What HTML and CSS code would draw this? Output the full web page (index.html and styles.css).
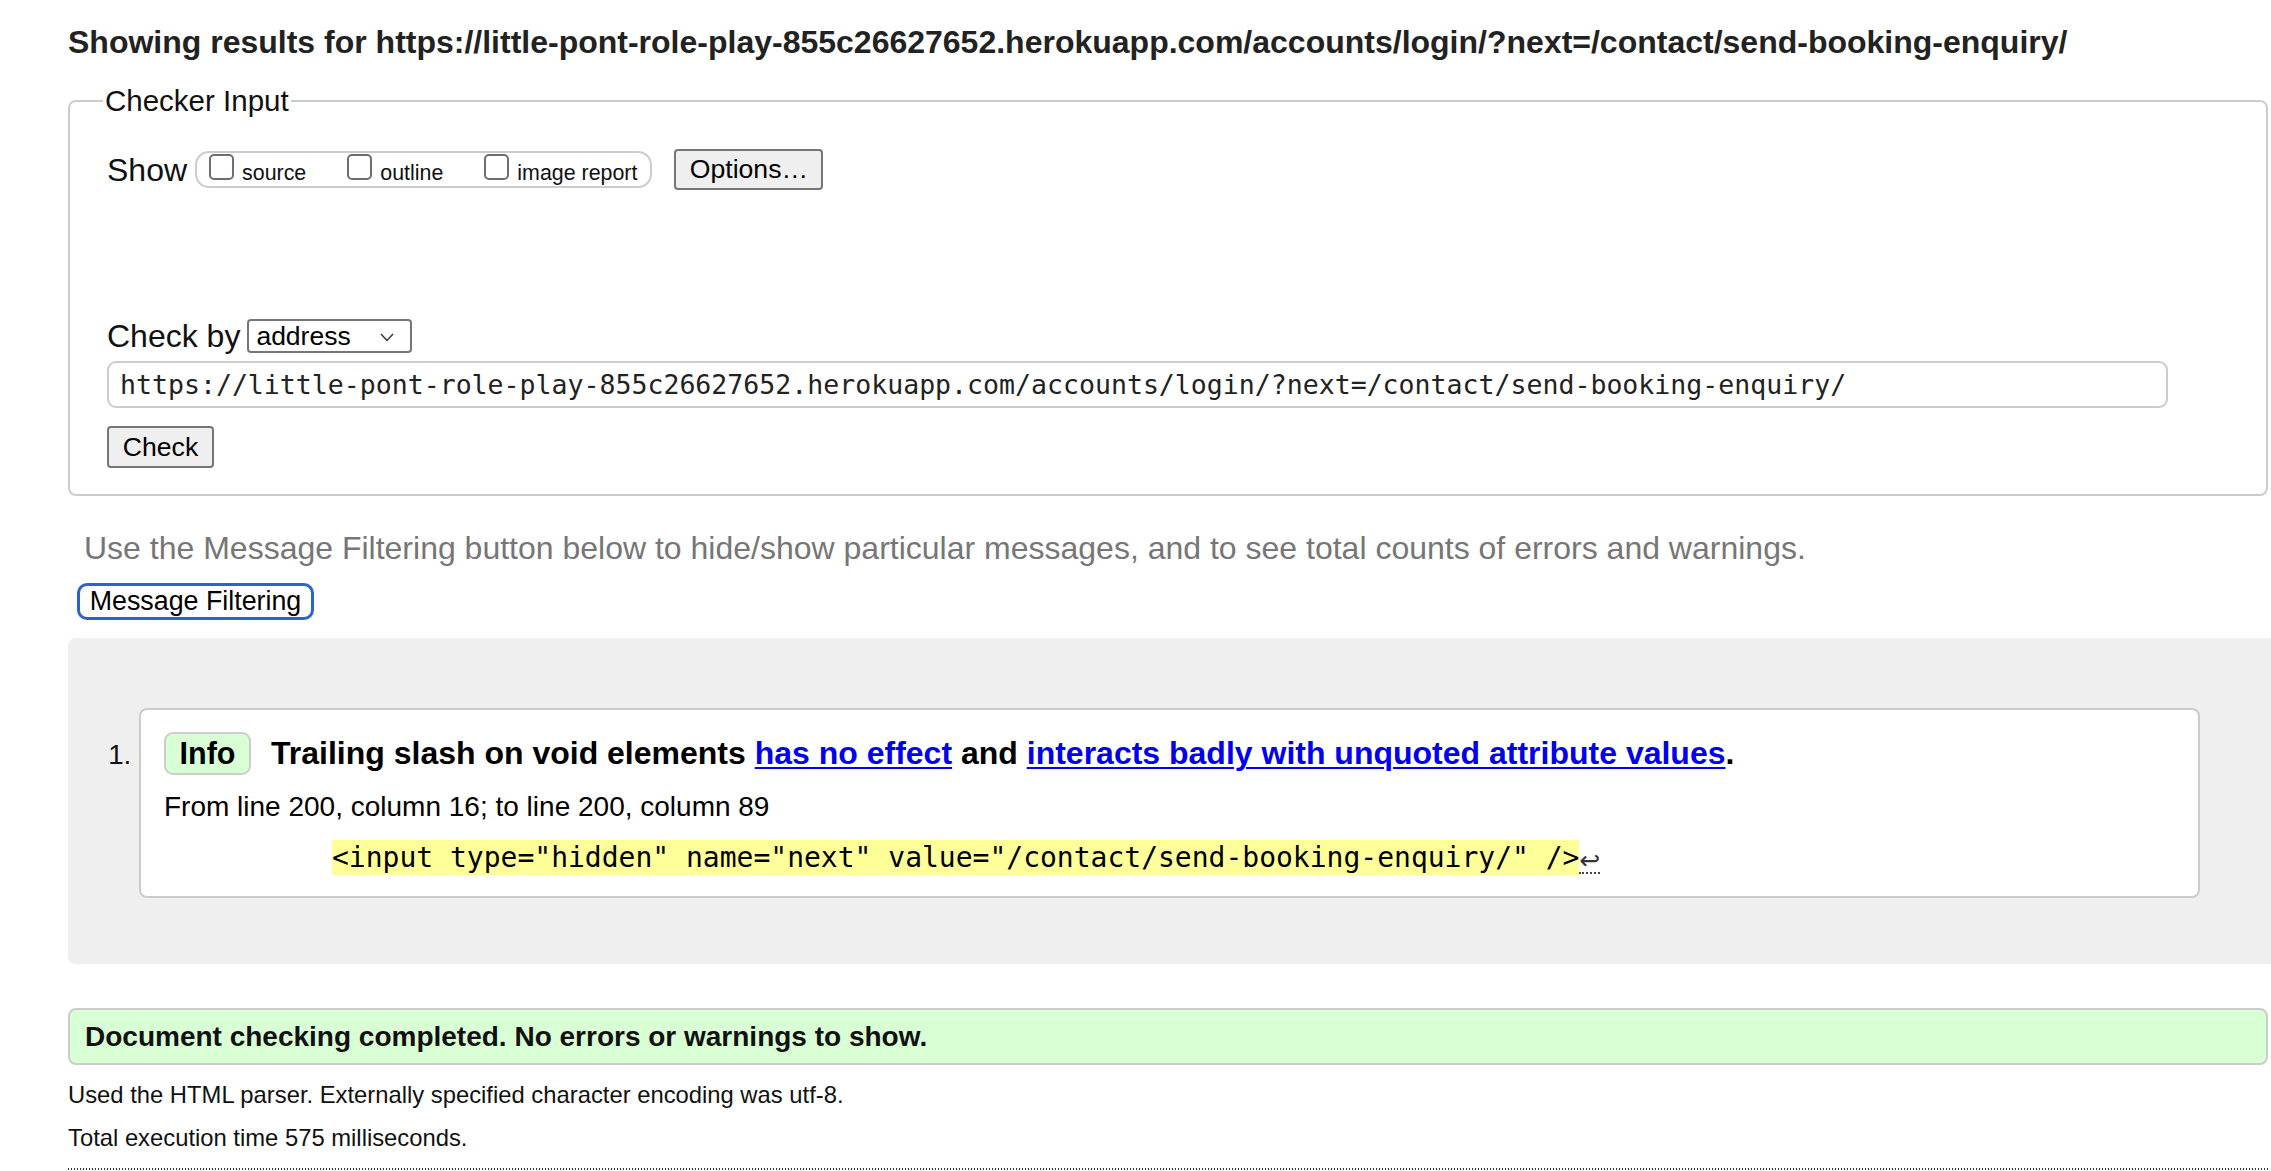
FILE: index.html
```html
<!DOCTYPE html>
<html lang="en">
<head>
<meta charset="utf-8">
<title>Nu Html Checker</title>
<link rel="stylesheet" href="styles.css">
</head>
<body>
<h2 class="heading">Showing results for https://little-pont-role-play-855c26627652.herokuapp.com/accounts/login/?next=/contact/send-booking-enquiry/</h2>

<fieldset class="checker">
  <legend class="legend">Checker Input</legend>
  <div class="show-row">
    <span class="label">Show</span>
    <span class="pill">
      <span class="opt"><span class="box"></span><span class="opt-text">source</span></span>
      <span class="opt"><span class="box"></span><span class="opt-text">outline</span></span>
      <span class="opt"><span class="box"></span><span class="opt-text">image report</span></span>
    </span>
    <span class="btn btn-options">Options…</span>
  </div>
  <div class="checkby-row">
    <span class="label">Check by</span>
    <span class="select"><span class="select-text">address</span><svg class="chev" width="14" height="9" viewBox="0 0 14 9"><polyline points="1,1 7,7.5 13,1" fill="none" stroke="#333" stroke-width="1.4"/></svg></span>
  </div>
  <div class="url-input">https://little-pont-role-play-855c26627652.herokuapp.com/accounts/login/?next=/contact/send-booking-enquiry/</div>
  <div class="check-row"><span class="btn btn-check">Check</span></div>
</fieldset>

<p class="hint">Use the Message Filtering button below to hide/show particular messages, and to see total counts of errors and warnings.</p>
<div class="filter-row"><span class="btn-filter">Message Filtering</span></div>

<div class="results">
  <ol class="messages">
    <li class="message">
      <p class="msg-title"><span class="badge">Info</span><span class="msg-text">Trailing slash on void elements <a href="#" class="link">has no effect</a> and <a href="#" class="link">interacts badly with unquoted attribute values</a>.</span></p>
      <p class="location">From line 200, column 16; to line 200, column 89</p>
      <p class="extract"><code class="code">&lt;input type="hidden" name="next" value="/contact/send-booking-enquiry/" /&gt;</code><span class="lf">↩</span></p>
    </li>
  </ol>
</div>

<p class="success">Document checking completed. No errors or warnings to show.</p>
<p class="meta meta-first">Used the HTML parser. Externally specified character encoding was utf-8.</p>
<p class="meta meta-second">Total execution time 575 milliseconds.</p>
<div class="dotted"></div>
</body>
</html>
```

FILE: styles.css
```css
html, body {
  margin: 0;
  background: #fff;
}
body {
  padding: 0 3px 0 68px;
  font-family: "Liberation Sans", Arial, sans-serif;
  color: #000;
  overflow: hidden;
}
p { margin: 0; }

.heading {
  margin: 25px 0 0 0;
  font-size: 32px;
  line-height: 34px;
  font-weight: bold;
  color: #222;
  white-space: nowrap;
}

.checker {
  margin: 25px 0 0 0;
  border: 2px solid #ccc;
  border-radius: 8px;
  padding: 0 20px 26px 37px;
  min-width: 0;
}
.legend {
  font-size: 29.5px;
  line-height: 34px;
  padding: 0 2px;
  margin-left: -4px;
  color: #111;
}

.show-row {
  display: flex;
  align-items: center;
  height: 41px;
  margin-top: 31px;
}
.label {
  font-size: 32px;
  line-height: 34px;
  color: #111;
  margin-right: 8px;
}
.pill {
  display: flex;
  align-items: center;
  height: 33px;
  border: 2px solid #ccc;
  border-radius: 14px;
  padding: 0 13px 0 12px;
}
.opt {
  display: flex;
  align-items: center;
  margin-right: 41px;
}
.opt:last-child { margin-right: 0; }
.box {
  display: inline-block;
  width: 21px;
  height: 22px;
  border: 2px solid #6e6e6e;
  border-radius: 5px;
  margin-right: 8px;
  margin-top: -6px;
  background: #fff;
}
.opt-text {
  font-size: 21.4px;
  line-height: 24px;
  margin-top: 6px;
  color: #111;
}
.btn {
  display: inline-flex;
  align-items: center;
  justify-content: center;
  background: #efefef;
  border: 2px solid #767676;
  border-radius: 4px;
  font-size: 26.6px;
  color: #000;
  box-sizing: border-box;
}
.btn-options {
  margin-left: 22px;
  width: 149px;
  height: 41px;
}

.checkby-row {
  display: flex;
  align-items: center;
  height: 34px;
  margin-top: 129px;
}
.checkby-row .label { margin-right: 7px; }
.select {
  display: inline-flex;
  align-items: center;
  justify-content: space-between;
  box-sizing: border-box;
  width: 165px;
  height: 34px;
  border: 2px solid #767676;
  border-radius: 4px;
  background: #fff;
  padding: 0 16px 0 7px;
}
.select-text {
  font-size: 26.5px;
  line-height: 30px;
  color: #000;
}
.chev { margin-top: 2px; }

.url-input {
  box-sizing: border-box;
  margin-top: 8px;
  width: 2061px;
  height: 47px;
  border: 2px solid #ccc;
  border-radius: 9px;
  padding: 0 11px;
  font-family: "DejaVu Sans Mono", monospace;
  font-size: 26.55px;
  line-height: 43px;
  color: #222;
  white-space: nowrap;
}
.check-row {
  margin-top: 18px;
  height: 42px;
  display: flex;
}
.btn-check {
  width: 107px;
  height: 42px;
}

.hint {
  margin: 35px 0 0 16px;
  font-size: 32px;
  line-height: 34px;
  color: #767676;
  white-space: nowrap;
}
.filter-row {
  margin: 18px 0 0 9px;
  display: flex;
}
.btn-filter {
  display: inline-flex;
  align-items: center;
  justify-content: center;
  box-sizing: border-box;
  width: 237px;
  height: 37px;
  border: 3px solid #2c62cf;
  border-radius: 10px;
  background: #fff;
  font-size: 26.8px;
  color: #000;
}

.results {
  margin: 18px -3px 0 0;
  background: #efefef;
  border-radius: 8px 0 0 8px;
  padding: 70px 71px 66px 71px;
  height: 190px;
}
.messages {
  margin: 0;
  padding: 0;
  list-style: decimal outside;
  font-size: 27.7px;
}
.message {
  box-sizing: border-box;
  height: 190px;
  background: #fff;
  border: 2px solid #ccc;
  border-radius: 8px;
  padding: 21px 20px 0 23px;
}
.message::marker {
  color: #111;
}
.msg-title {
  display: flex;
  align-items: center;
  height: 44px;
  font-weight: bold;
  font-size: 32px;
  line-height: 36px;
}
.badge {
  display: inline-flex;
  align-items: center;
  justify-content: center;
  box-sizing: border-box;
  width: 87px;
  height: 43px;
  background: #d9ffd4;
  border: 2px solid #ccc;
  border-radius: 9px;
  margin-right: 20px;
  color: #000;
  font-size: 30.5px;
}
.msg-text { white-space: nowrap; }
.link {
  color: #0000ee;
  text-decoration: underline;
  text-decoration-thickness: 2px;
  text-underline-offset: 3px;
}
.location {
  margin-top: 15px;
  font-size: 28px;
  line-height: 34px;
  color: #000;
}
.extract {
  margin: 16px 0 0 168px;
  height: 35px;
  display: flex;
  align-items: center;
  white-space: nowrap;
}
.code {
  display: inline-block;
  background: #ffff99;
  font-family: "DejaVu Sans Mono", monospace;
  font-size: 28px;
  line-height: 35px;
  height: 35px;
  color: #000;
}
.lf {
  font-family: "DejaVu Sans", sans-serif;
  font-size: 25px;
  color: #333;
  line-height: 22px;
  border-bottom: 2px dotted #444;
  margin-top: 8px;
}

.success {
  margin-top: 44px;
  box-sizing: border-box;
  height: 57px;
  background: #d9ffd4;
  border: 2px solid #ccc;
  border-radius: 8px;
  padding: 0 15px;
  font-weight: bold;
  font-size: 28px;
  line-height: 53px;
  color: #111;
}
.meta {
  font-size: 23.8px;
  line-height: 30px;
  color: #111;
}
.meta-first { margin-top: 15px; }
.meta-second { margin-top: 13px; }
.dotted {
  margin-top: 15px;
  height: 2px;
  background: repeating-linear-gradient(to right, #333 0, #333 1px, transparent 1px, transparent 3px);
}
```
